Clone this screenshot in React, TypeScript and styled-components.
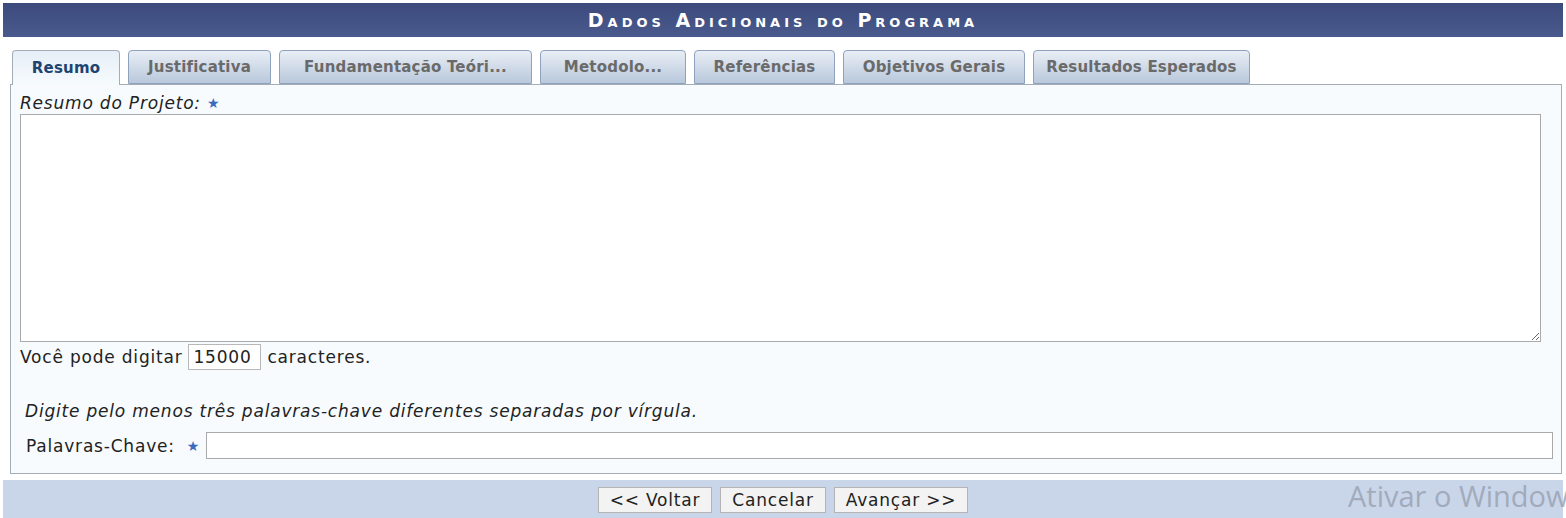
import React, {useState} from 'react';
import styled, {createGlobalStyle} from 'styled-components';

const GlobalStyle = createGlobalStyle`
    html, body {
        margin: 0;
        padding: 0;
        background: #ffffff;
        overflow: hidden;
    }
    body {
        font-family: "DejaVu Sans", Verdana, sans-serif;
        color: #222;
    }
`;

const Page = styled.div`
    position: relative;
    width: 1560px;
    padding: 3px 3px 0;
`;

const Caption = styled.div`
    height: 34px;
    display: flex;
    align-items: center;
    justify-content: center;
    background: linear-gradient(to bottom, #3c4a7c, #4a5a8e);
    color: #fff;
    font-weight: bold;
    font-variant: small-caps;
    font-size: 19px;
    letter-spacing: 4px;
`;

const Body = styled.div`
    padding: 12px 1px 0 7px;
`;

const TabStrip = styled.div`
    display: flex;
    gap: 8px;
    padding-left: 2px;
    height: 35px;
    align-items: flex-end;
`;

const Tab = styled.div<{$active?: boolean; $width: number}>`
    width: ${p => p.$width}px;
    height: ${p => p.$active ? '35px' : '34px'};
    margin-bottom: ${p => p.$active ? '-1px' : '0'};
    box-sizing: border-box;
    display: flex;
    align-items: center;
    justify-content: center;
    white-space: nowrap;
    border: 1px solid ${p => p.$active ? '#a4adb6' : '#8ea2bd'};
    border-bottom: ${p => p.$active ? 'none' : '1px solid #8ea2bd'};
    border-radius: 4px 4px 0 0;
    background: ${p => p.$active
        ? 'linear-gradient(to bottom, #e6eef7, #f7fbfd)'
        : 'linear-gradient(to bottom, #e9eef5, #b9c8dc)'};
    color: ${p => p.$active ? '#1e4471' : '#6a6a6a'};
    font-weight: bold;
    font-size: 15px;
    letter-spacing: 0.2px;
    position: relative;
    z-index: ${p => p.$active ? 1 : 0};
    cursor: pointer;
`;

const Panel = styled.div`
    border: 1px solid #a4adb6;
    background: #f7fbfd;
    padding: 8px 20px 12px 9px;
    height: 390px;
    box-sizing: border-box;
`;

const Label = styled.div<{$italic?: boolean}>`
    font-size: 17px;
    letter-spacing: 0.8px;
    font-style: ${p => p.$italic ? 'italic' : 'normal'};
    line-height: 20px;
    color: #222;
`;

const Star = styled.span`
    color: #3a6bbf;
    font-style: normal;
    font-size: 14px;
    margin-left: 6px;
    vertical-align: 1px;
`;

const TextArea = styled.textarea`
    display: block;
    box-sizing: border-box;
    width: 1521px;
    height: 228px;
    margin: 1px 0 0;
    border: 1px solid #a9a9a9;
    background: #fff;
    resize: both;
    font-family: "DejaVu Sans", sans-serif;
`;

const CounterRow = styled.div`
    display: flex;
    align-items: center;
    gap: 6px;
    margin-top: 2px;
    font-size: 17px;
    letter-spacing: 0.8px;
`;

const CounterBox = styled.input`
    box-sizing: border-box;
    width: 73px;
    height: 26px;
    border: 1px solid #b8b8b8;
    background: #fff;
    font-family: "DejaVu Sans", sans-serif;
    font-size: 17px;
    letter-spacing: 0.8px;
    padding: 0 4px;
    color: #222;
`;

const Hint = styled(Label)`
    margin: 31px 0 0 5px;
`;

const KeywordRow = styled.div`
    display: flex;
    align-items: center;
    gap: 6px;
    margin: 11px 0 0 6px;
    font-size: 17px;
    letter-spacing: 0.8px;
`;

const KeywordInput = styled.input`
    flex: 1;
    box-sizing: border-box;
    height: 27px;
    border: 1px solid #a9a9a9;
    background: #fff;
    margin-right: -12px;
`;

const Footer = styled.div`
    margin-top: 6px;
    height: 40px;
    background: #c9d5e9;
    display: flex;
    align-items: center;
    justify-content: center;
    gap: 8px;
`;

const Button = styled.button`
    height: 26px;
    padding: 0 11px;
    border: 1px solid #b4b4b4;
    background: #f3f3f3;
    font-family: "DejaVu Sans", sans-serif;
    font-size: 17px;
    letter-spacing: 0.8px;
    color: #222;
`;

const Watermark = styled.div`
    position: absolute;
    left: 1348px;
    top: 476px;
    white-space: nowrap;
    font-family: "Open Sans", sans-serif;
    font-size: 29px;
    color: rgba(150, 160, 175, 0.8);
    pointer-events: none;
`;

const tabs = [
    {label: 'Resumo', width: 108},
    {label: 'Justificativa', width: 143},
    {label: 'Fundamentação Teóri...', width: 253},
    {label: 'Metodolo...', width: 146},
    {label: 'Referências', width: 141},
    {label: 'Objetivos Gerais', width: 182},
    {label: 'Resultados Esperados', width: 217},
];

export default function App() {
    const [active, setActive] = useState(0);
    const [resumo, setResumo] = useState('');

    return <>
        <GlobalStyle />
        <Page>
            <Caption>Dados Adicionais do Programa</Caption>
            <Body>
                <TabStrip>
                    {tabs.map((t, i) =>
                        <Tab key={t.label} $width={t.width} $active={i === active} onClick={() => setActive(i)}>
                            {t.label}
                        </Tab>
                    )}
                </TabStrip>
                <Panel>
                    <Label $italic>Resumo do Projeto:<Star>★</Star></Label>
                    <TextArea value={resumo} onChange={e => setResumo(e.target.value)} />
                    <CounterRow>
                        Você pode digitar
                        <CounterBox readOnly value={15000 - resumo.length} />
                        caracteres.
                    </CounterRow>
                    <Hint $italic>Digite pelo menos três palavras-chave diferentes separadas por vírgula.</Hint>
                    <KeywordRow>
                        Palavras-Chave:<Star>★</Star>
                        <KeywordInput />
                    </KeywordRow>
                </Panel>
            </Body>
            <Footer>
                <Button>&lt;&lt; Voltar</Button>
                <Button>Cancelar</Button>
                <Button>Avançar &gt;&gt;</Button>
            </Footer>
            <Watermark>Ativar o Windows</Watermark>
        </Page>
    </>;
}
